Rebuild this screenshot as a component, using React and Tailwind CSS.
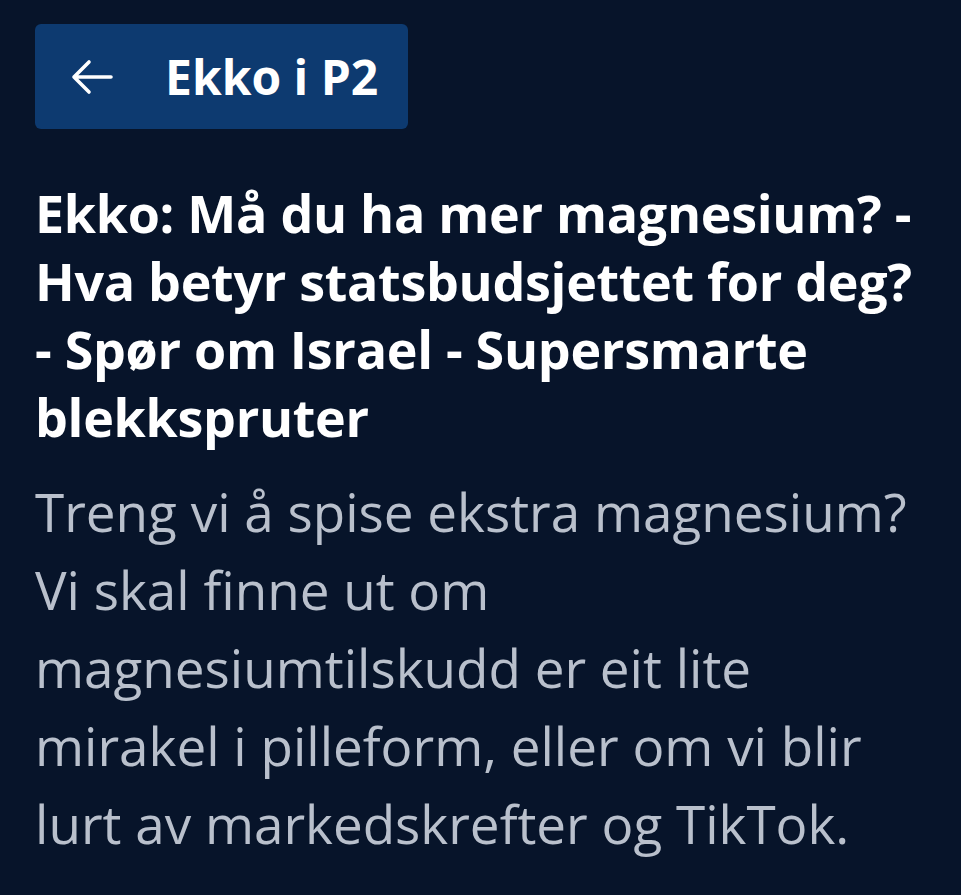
export default function App() {
  return (
    <div className="min-h-[895px] w-full bg-[#07142a] pl-[35px] pr-[30px] pt-[24px] text-white" style={{ fontFamily: "'Open Sans', 'Noto Sans', sans-serif" }}>
      <button
        type="button"
        className="flex h-[105px] w-[373px] items-center gap-[52px] rounded-[6px] bg-[#0d3a70] pl-[36px] text-white"
      >
        <svg width="42" height="36" viewBox="0 0 42 36" fill="none" stroke="currentColor" strokeWidth="3.6" strokeLinecap="round" strokeLinejoin="round">
          <path d="M40 18H3M18 3L3 18l15 15" />
        </svg>
        <span className="text-[48px] font-bold">Ekko i P2</span>
      </button>

      <h1 className="mt-[50px] text-[52px] font-bold leading-[68px] tracking-[-0.3px]">
        Ekko: Må du ha mer magnesium? - Hva betyr statsbudsjettet for deg? - Spør om Israel - Supersmarte blekkspruter
      </h1>
      <p className="mt-[22px] text-[53px] leading-[78px] text-[#b9c0cc]">
        Treng vi å spise ekstra magnesium? Vi skal finne ut om magnesiumtilskudd er eit lite mirakel i pilleform, eller om vi blir lurt av markedskrefter og TikTok.
      </p>
    </div>
  );
}
